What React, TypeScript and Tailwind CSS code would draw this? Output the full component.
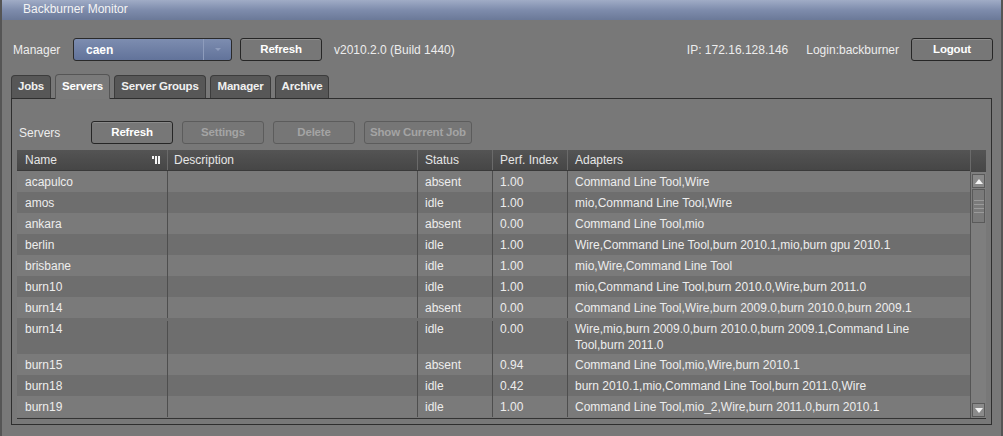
import React from "react";

type Row = {
  name: string;
  status: string;
  perf: string;
  adapters: React.ReactNode;
  tall?: boolean;
};

const rows: Row[] = [
  { name: "acapulco", status: "absent", perf: "1.00", adapters: "Command Line Tool,Wire" },
  { name: "amos", status: "idle", perf: "1.00", adapters: "mio,Command Line Tool,Wire" },
  { name: "ankara", status: "absent", perf: "0.00", adapters: "Command Line Tool,mio" },
  { name: "berlin", status: "idle", perf: "1.00", adapters: "Wire,Command Line Tool,burn 2010.1,mio,burn gpu 2010.1" },
  { name: "brisbane", status: "idle", perf: "1.00", adapters: "mio,Wire,Command Line Tool" },
  { name: "burn10", status: "idle", perf: "1.00", adapters: "mio,Command Line Tool,burn 2010.0,Wire,burn 2011.0" },
  { name: "burn14", status: "absent", perf: "0.00", adapters: "Command Line Tool,Wire,burn 2009.0,burn 2010.0,burn 2009.1" },
  {
    name: "burn14",
    status: "idle",
    perf: "0.00",
    adapters: (
      <>
        Wire,mio,burn 2009.0,burn 2010.0,burn 2009.1,Command Line
        <br />
        Tool,burn 2011.0
      </>
    ),
    tall: true,
  },
  { name: "burn15", status: "absent", perf: "0.94", adapters: "Command Line Tool,mio,Wire,burn 2010.1" },
  { name: "burn18", status: "idle", perf: "0.42", adapters: "burn 2010.1,mio,Command Line Tool,burn 2011.0,Wire" },
  { name: "burn19", status: "idle", perf: "1.00", adapters: "Command Line Tool,mio_2,Wire,burn 2011.0,burn 2010.1" },
];

const Button = ({ label, width, disabled }: { label: string; width: string; disabled?: boolean }) => (
  <button
    className={
      "h-[23px] rounded-[3px] border text-[11.5px] tracking-[-0.2px] font-bold flex items-center justify-center " +
      width +
      (disabled
        ? " border-[#5c5c5c] text-[#a4a4a4] bg-[#767676]"
        : " border-[#262626] text-white bg-[#777777] shadow-[inset_0_1px_0_#8a8a8a]")
    }
  >
    {label}
  </button>
);

const Tab = ({ label, width, active }: { label: string; width: string; active?: boolean }) => (
  <div
    className={
      "rounded-t-[4px] border border-b-0 text-[11.5px] tracking-[-0.2px] font-bold flex items-center justify-center " +
      width +
      (active
        ? " h-[25px] bg-[#7a7a7a] text-white relative top-[1px] border-[#555]"
        : " h-[23px] bg-[#575757] text-[#f0f0f0] border-[#3c3c3c]")
    }
  >
    {label}
  </div>
);

const SortIcon = () => (
  <svg width="9" height="10" viewBox="0 0 9 10" className="mr-[6px]">
    <rect x="0" y="1" width="2" height="3" fill="#f4f4f4" />
    <rect x="3" y="1" width="2" height="8" fill="#f4f4f4" />
    <rect x="6" y="1" width="2" height="8" fill="#f4f4f4" />
  </svg>
);

const ScrollBar = () => (
  <div className="w-[16px] bg-[#7e7e7e] border-l border-[#555] flex flex-col">
    <div className="h-[14px] mx-[1px] mt-[2px] bg-[#8a8a8a] border border-[#5a5a5a] flex items-center justify-center">
      <svg width="8" height="5" viewBox="0 0 8 5">
        <path d="M0 5 L4 0 L8 5 Z" fill="#f4f4f4" />
      </svg>
    </div>
    <div className="h-[34px] mx-[1px] mt-[1px] bg-[#7a7a7a] border border-[#5a5a5a] flex flex-col items-center justify-center gap-[3px]">
      <div className="w-[10px] h-[1px] bg-[#9a9a9a]" />
      <div className="w-[10px] h-[1px] bg-[#9a9a9a]" />
      <div className="w-[10px] h-[1px] bg-[#9a9a9a]" />
      <div className="w-[10px] h-[1px] bg-[#9a9a9a]" />
    </div>
    <div className="flex-1" />
    <div className="h-[14px] mx-[1px] mb-[1px] bg-[#8a8a8a] border border-[#5a5a5a] flex items-center justify-center">
      <svg width="8" height="5" viewBox="0 0 8 5">
        <path d="M0 0 L8 0 L4 5 Z" fill="#f4f4f4" />
      </svg>
    </div>
  </div>
);

const cell = "pl-[7px] border-r border-[#4e4e4e]";

export default function App() {
  return (
    <div className="w-[1003px] h-[436px] overflow-hidden bg-[#787878] text-[12px] text-[#ededed] font-['Liberation_Sans',sans-serif] border-x-2 border-[#555]">
      <div className="h-[20px] bg-gradient-to-b from-[#a0acc6] via-[#7e8cac] to-[#6b7998] pl-[21px] leading-[19px] text-[#f4f4f4]">
        Backburner Monitor
      </div>

      <div className="flex items-center h-[23px] mt-[18px] pl-[11px] pr-[8px]">
        <span className="w-[60px]">Manager</span>
        <div className="w-[159px] h-[23px] rounded-[3px] border border-[#2a2a2a] bg-gradient-to-b from-[#7d8db0] to-[#62739a] flex items-center">
          <span className="flex-1 pl-[12px] font-bold text-white">caen</span>
          <div className="w-[28px] h-full border-l border-[#8e9cbc] flex items-center justify-center">
            <svg width="6" height="3" viewBox="0 0 6 3">
              <path d="M0 0 L6 0 L3 3 Z" fill="#8e9cbc" />
            </svg>
          </div>
        </div>
        <div className="ml-[8px]">
          <Button label="Refresh" width="w-[82px]" />
        </div>
        <span className="ml-[12px]">v2010.2.0 (Build 1440)</span>
        <div className="flex-1" />
        <span>IP: 172.16.128.146</span>
        <span className="ml-[18px]">Login:backburner</span>
        <div className="ml-[12px]">
          <Button label="Logout" width="w-[82px]" />
        </div>
      </div>

      <div className="flex items-end gap-[4px] mt-[12px] pl-[9px] h-[25px]">
        <Tab label="Jobs" width="w-[40px]" />
        <Tab label="Servers" width="w-[55px]" active />
        <Tab label="Server Groups" width="w-[92px]" />
        <Tab label="Manager" width="w-[61px]" />
        <Tab label="Archive" width="w-[54px]" />
      </div>

      <div className="mx-[9px] h-[327px] border border-[#2e2e2e] flex flex-col">
        <div className="flex items-center mt-[22px] h-[23px] pl-[7px] gap-[9px]">
          <span className="w-[63px]">Servers</span>
          <Button label="Refresh" width="w-[82px]" />
          <Button label="Settings" width="w-[82px]" disabled />
          <Button label="Delete" width="w-[82px]" disabled />
          <Button label="Show Current Job" width="w-[108px]" disabled />
        </div>

        <div className="mt-[6px] ml-[5px] w-[969px] h-[269px] flex border-b border-[#333]">
          <div className="flex-1 flex flex-col">
            <div className="flex h-[21px] bg-gradient-to-b from-[#545454] to-[#464646] text-[#e6e6e6] items-center border-b border-[#3a3a3a]">
              <div className="w-[151px] pl-[8px] flex items-center justify-between h-full border-r border-[#6a6a6a]">
                Name
                <SortIcon />
              </div>
              <div className="w-[250px] pl-[6px] h-full flex items-center border-r border-[#6a6a6a]">Description</div>
              <div className="w-[75px] pl-[7px] h-full flex items-center border-r border-[#6a6a6a]">Status</div>
              <div className="w-[75px] pl-[7px] h-full flex items-center border-r border-[#6a6a6a]">Perf. Index</div>
              <div className="flex-1 pl-[7px] h-full flex items-center">Adapters</div>
            </div>
            {rows.map((r, i) => (
              <div
                key={i}
                className={
                  "flex " +
                  (r.tall ? "h-[36px] leading-[16px] pt-[3px]" : "h-[21px] items-center") +
                  (i % 2 === 0 ? " bg-[#7a7a7a]" : " bg-[#6e6e6e]")
                }
              >
                <div className={"w-[151px] pl-[8px] h-full " + cell + (r.tall ? "" : " flex items-center")}>{r.name}</div>
                <div className={"w-[250px] h-full " + cell} />
                <div className={"w-[75px] h-full " + cell + (r.tall ? "" : " flex items-center")}>{r.status}</div>
                <div className={"w-[75px] h-full " + cell + (r.tall ? "" : " flex items-center")}>{r.perf}</div>
                <div className={"flex-1 pl-[7px] h-full" + (r.tall ? "" : " flex items-center")}>{r.adapters}</div>
              </div>
            ))}
          </div>
          <div className="flex flex-col">
            <div className="h-[22px] w-[16px] bg-gradient-to-b from-[#545454] to-[#464646] border-l border-[#6a6a6a]" />
            <div className="flex-1 flex">
              <ScrollBar />
            </div>
          </div>
        </div>
      </div>
    </div>
  );
}
